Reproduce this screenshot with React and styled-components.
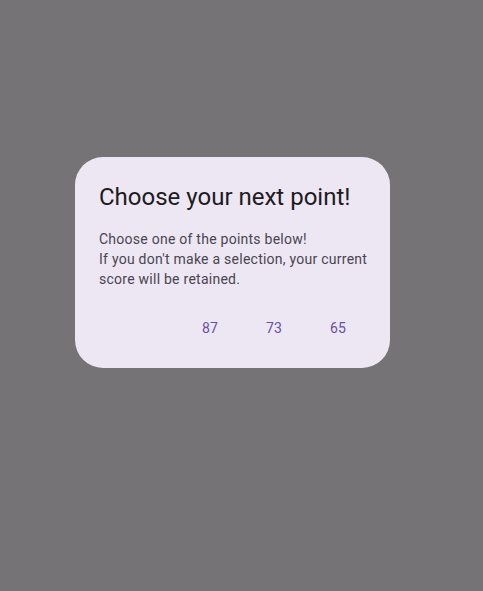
import styled, { createGlobalStyle } from "styled-components";

const Global = createGlobalStyle`
  html, body { margin: 0; padding: 0; }
  body { font-family: Roboto, "Noto Sans", sans-serif; }
`;

const points = [87, 73, 65];

export default function App() {
  return (
    <Scrim>
      <Global />
      <Dialog>
        <Title>Choose your next point!</Title>
        <Body>
          Choose one of the points below!
          <br />
          If you don't make a selection, your current score will be retained.
        </Body>
        <Actions>
          {points.map((p) => (
            <PointBtn key={p}>{p}</PointBtn>
          ))}
        </Actions>
      </Dialog>
    </Scrim>
  );
}

const Scrim = styled.div`
  width: 483px;
  height: 591px;
  background: #767377;
  display: flex;
  align-items: flex-start;
  padding: 157px 0 0 75px;
  box-sizing: border-box;
`;

const Dialog = styled.div`
  width: 315px;
  height: 211px;
  box-sizing: border-box;
  background: #ede7f3;
  border-radius: 28px;
  padding: 24px 20px 16px 24px;
  display: flex;
  flex-direction: column;
`;

const Title = styled.h2`
  margin: 0;
  font-size: 24px;
  line-height: 32px;
  font-weight: 400;
  color: #1d1b20;
`;

const Body = styled.p`
  margin: 16px -4px 0 0;
  font-size: 14px;
  line-height: 20px;
  letter-spacing: 0.25px;
  color: #49454f;
`;

const Actions = styled.div`
  margin-top: auto;
  display: flex;
  justify-content: flex-end;
`;

const PointBtn = styled.button`
  width: 64px;
  height: 48px;
  border: none;
  background: transparent;
  font-family: Roboto, sans-serif;
  font-size: 14px;
  font-weight: 400;
  letter-spacing: 0.1px;
  color: #6750a4;
  cursor: pointer;
`;
